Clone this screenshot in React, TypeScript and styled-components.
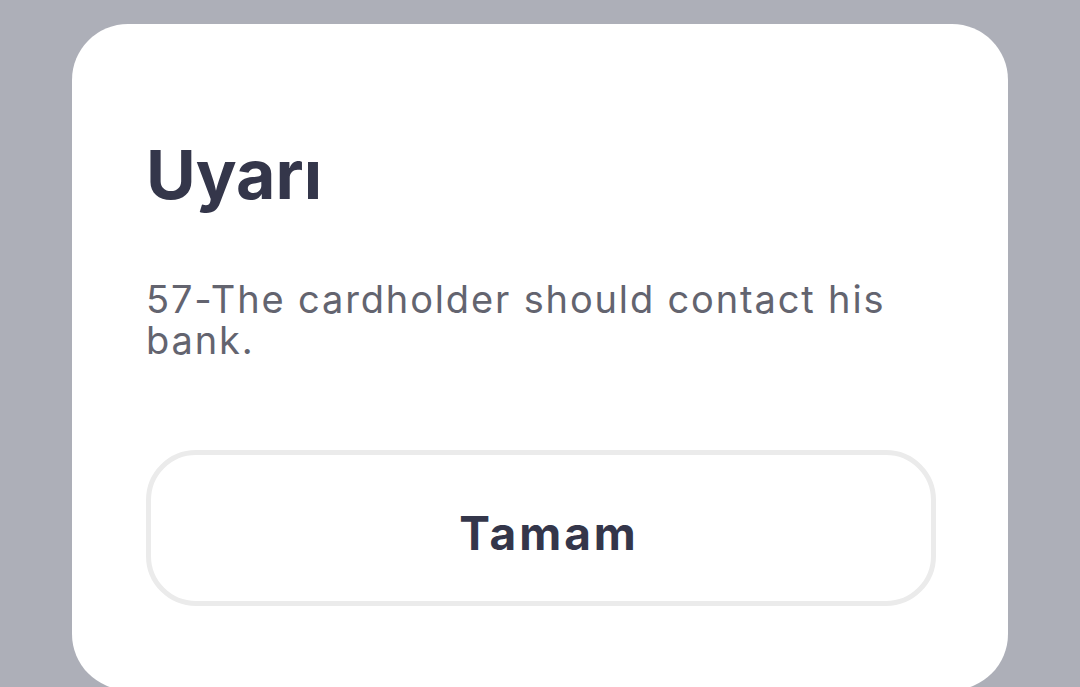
import styled, { createGlobalStyle } from 'styled-components';

const GlobalStyle = createGlobalStyle`
  html, body {
    margin: 0;
    padding: 0;
    background: #adafb8;
    height: 100%;
    overflow: hidden;
  }
  #root {
    height: 100%;
  }
`;

const Screen = styled.div`
  height: 100%;
  padding: 24px 72px 0;
  box-sizing: border-box;
  font-family: Inter, 'Noto Sans', sans-serif;
`;

const Card = styled.div`
  background: #ffffff;
  border-radius: 56px;
  height: 666px;
  padding: 110px 74px 0;
  box-sizing: border-box;
`;

const Title = styled.h1`
  margin: 0;
  font-size: 68px;
  line-height: 80px;
  font-weight: 700;
  color: #34364a;
  letter-spacing: 0;
`;

const Message = styled.p`
  margin: 65px 0 0;
  width: 780px;
  font-size: 38px;
  line-height: 41px;
  font-weight: 400;
  color: #63646f;
  letter-spacing: 1.85px;
`;

const OkButton = styled.button`
  display: flex;
  align-items: center;
  justify-content: center;
  margin-top: 89px;
  padding: 10px 0 0 16px;
  width: 790px;
  height: 156px;
  border: 5px solid #ebebeb;
  border-radius: 50px;
  background: #ffffff;
  font-family: inherit;
  font-size: 46px;
  font-weight: 700;
  color: #34364a;
  letter-spacing: 3px;
  cursor: pointer;
`;

const App = () => {
  return (
    <>
      <GlobalStyle />
      <Screen>
        <Card>
          <Title>Uyarı</Title>
          <Message>57-The cardholder should contact his bank.</Message>
          <OkButton>Tamam</OkButton>
        </Card>
      </Screen>
    </>
  );
};

export default App;
